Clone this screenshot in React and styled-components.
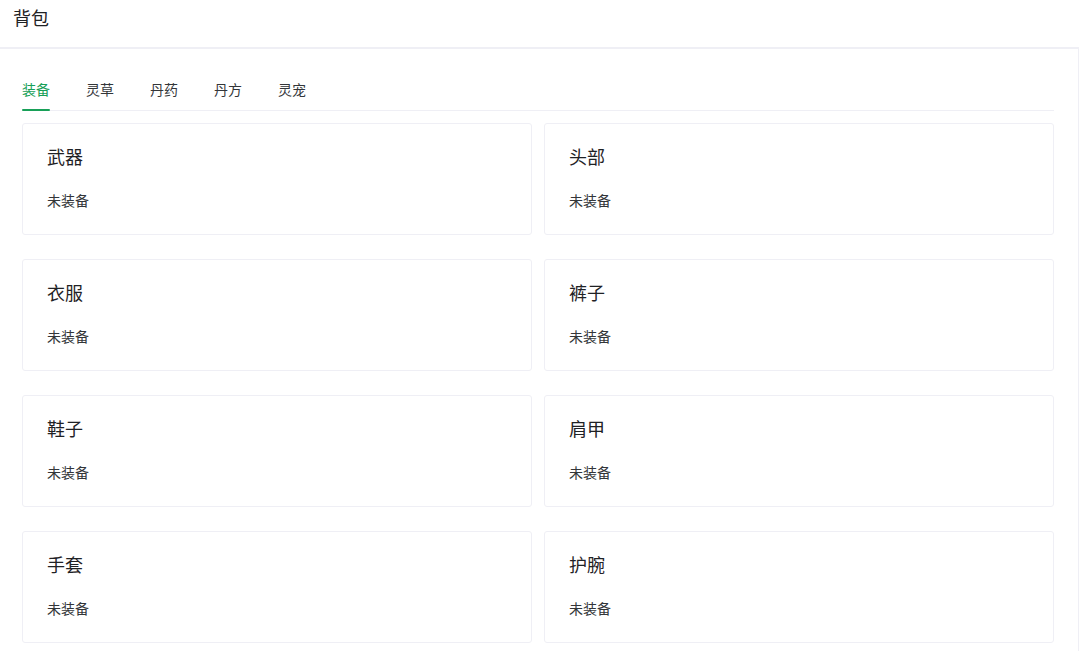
import { useState } from "react";
import styled, { createGlobalStyle } from "styled-components";

const GlobalStyle = createGlobalStyle`
  html, body {
    margin: 0;
    padding: 0;
    background: #fff;
  }
  body {
    font-family: "Noto Sans", "Noto Sans CJK SC", sans-serif;
    color: #333639;
    -webkit-font-smoothing: antialiased;
  }
`;

const Page = styled.div`
  width: 1079px;
  min-height: 651px;
  box-sizing: border-box;
`;

const Header = styled.header`
  height: 43px;
  padding: 4px 13px 0;
  border-bottom: 2px solid #efeff5;
  font-size: 18px;
  line-height: 28px;
  color: #1f2225;
`;

const Panel = styled.main`
  box-sizing: border-box;
  padding: 20px 24px 8px 22px;
  border-right: 1px solid #efeff5;
  min-height: 602px;
`;

const TabNav = styled.nav`
  display: flex;
  gap: 36px;
  border-bottom: 1px solid #efeff5;
`;

const Tab = styled.button`
  position: relative;
  border: none;
  background: none;
  padding: 10px 0 9px;
  margin: 0;
  font-family: inherit;
  font-size: 14px;
  line-height: 22px;
  cursor: pointer;
  color: ${({ $active }) => ($active ? "#18a058" : "#333639")};

  &::after {
    content: "";
    position: absolute;
    left: 0;
    right: 0;
    bottom: -1px;
    height: 2px;
    border-radius: 1px;
    background: ${({ $active }) => ($active ? "#18a058" : "transparent")};
  }
`;

const SlotGrid = styled.div`
  display: grid;
  grid-template-columns: 1fr 1fr;
  column-gap: 12px;
  row-gap: 24px;
  padding-top: 12px;
`;

const SlotCard = styled.section`
  height: 112px;
  box-sizing: border-box;
  border: 1px solid #efeff5;
  border-radius: 3px;
  padding: 19px 24px 0;
  background: #fff;
`;

const SlotTitle = styled.div`
  font-size: 18px;
  line-height: 28.8px;
  color: #1f2225;
  margin-bottom: 18px;
`;

const SlotState = styled.div`
  font-size: 14px;
  line-height: 22.4px;
  color: #333639;
`;

const tabs = ["装备", "灵草", "丹药", "丹方", "灵宠"];
const slots = ["武器", "头部", "衣服", "裤子", "鞋子", "肩甲", "手套", "护腕"];

export default function App() {
  const [active, setActive] = useState(0);

  return (
    <Page>
      <GlobalStyle />
      <Header>背包</Header>
      <Panel>
        <TabNav>
          {tabs.map((t, i) => (
            <Tab key={t} $active={i === active} onClick={() => setActive(i)}>
              {t}
            </Tab>
          ))}
        </TabNav>
        <SlotGrid>
          {slots.map((s) => (
            <SlotCard key={s}>
              <SlotTitle>{s}</SlotTitle>
              <SlotState>未装备</SlotState>
            </SlotCard>
          ))}
        </SlotGrid>
      </Panel>
    </Page>
  );
}
